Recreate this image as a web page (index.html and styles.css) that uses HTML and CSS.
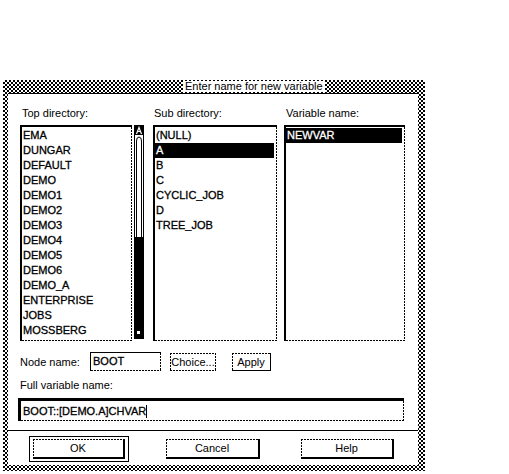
FILE: index.html
```html
<!DOCTYPE html>
<html>
<head>
<meta charset="utf-8">
<link rel="stylesheet" href="styles.css">
</head>
<body>
<div class="dialog">
  <div class="titlebar"><span class="title">Enter name for new variable</span></div>
  <div class="panel">
    <div class="cols">
      <div class="col col1">
        <div class="lbl">Top directory:</div>
        <div class="listrow">
          <div class="list list1 dash-rb">
            <div class="item">EMA</div>
            <div class="item">DUNGAR</div>
            <div class="item">DEFAULT</div>
            <div class="item">DEMO</div>
            <div class="item">DEMO1</div>
            <div class="item">DEMO2</div>
            <div class="item">DEMO3</div>
            <div class="item">DEMO4</div>
            <div class="item">DEMO5</div>
            <div class="item">DEMO6</div>
            <div class="item">DEMO_A</div>
            <div class="item">ENTERPRISE</div>
            <div class="item">JOBS</div>
            <div class="item">MOSSBERG</div>
          </div>
          <svg class="sb" width="10" height="214" viewBox="0 0 10 214">
            <rect x="0" y="0" width="10" height="214" fill="#fff"/>
            <rect x="0" y="0" width="10" height="10" fill="#000"/>
            <path d="M2.5 9 L5 2.5 L7.5 9 M3.5 6.5 H6.5" stroke="#fff" stroke-width="1.2" fill="none"/>
            <path d="M0.5 10 V112 M9.5 10 V112" stroke="#000" stroke-width="1"/>
            <path d="M2.5 112 V16 Q2.5 12 5 12 Q7.5 12 7.5 16 V112" stroke="#000" stroke-width="1" fill="none"/>
            <rect x="0" y="112" width="10" height="102" fill="#000"/>
            <rect x="3" y="206" width="3" height="3" fill="#fff"/>
          </svg>
        </div>
      </div>
      <div class="col col2">
        <div class="lbl">Sub directory:</div>
        <div class="list list2 dash-rb">
          <div class="item">(NULL)</div>
          <div class="item sel">A</div>
          <div class="item">B</div>
          <div class="item">C</div>
          <div class="item">CYCLIC_JOB</div>
          <div class="item">D</div>
          <div class="item">TREE_JOB</div>
        </div>
      </div>
      <div class="col col3">
        <div class="lbl">Variable name:</div>
        <div class="list list3 dash-rb">
          <div class="item sel">NEWVAR</div>
        </div>
      </div>
    </div>

    <div class="noderow">
      <span class="nodelbl">Node name:</span>
      <div class="field nodefield dash-rb">BOOT</div>
      <div class="smallbtn choice dash-all">Choice...</div>
      <div class="smallbtn apply dash-tl">Apply</div>
    </div>

    <div class="fulllbl">Full variable name:</div>
    <div class="field fullfield dash-rb">BOOT::[DEMO.A]CHVAR<span class="caret"></span></div>

    <div class="sep"></div>

    <div class="btnrow">
      <div class="defwrap"><div class="btn ok dash-tl">OK</div></div>
      <div class="btn cancel dash-tl">Cancel</div>
      <div class="btn help dash-tl">Help</div>
    </div>
  </div>
</div>
</body>
</html>
```

FILE: styles.css
```css
body {
  margin: 0;
  background: #fff;
  font-family: "Liberation Sans", Arial, sans-serif;
  font-size: 11px;
  color: #000;
}

.dialog {
  margin: 80px 0 0 3px;
  width: 422px;
  height: 391px;
  box-sizing: border-box;
  padding: 0 7px 6px 5px;
  background: repeating-conic-gradient(#000 0 25%, #fff 0 50%) 0 0 / 4px 4px;
  display: flex;
  flex-direction: column;
}

.titlebar {
  height: 13px;
  display: flex;
  justify-content: flex-start;
  align-items: center;
}

.title {
  background: #fff;
  margin-left: 175px;
  padding: 0 2px;
  line-height: 11px;
  height: 11px;
}

.panel {
  flex: 1;
  background: #fff;
  border-top: 1px solid #000;
  display: flex;
  flex-direction: column;
}

/* dashed edges */
.dash-rb {
  background-image:
    linear-gradient(180deg, #000 2px, transparent 2px),
    linear-gradient(90deg, #000 2px, transparent 2px);
  background-size: 1px 3px, 3px 1px;
  background-repeat: repeat-y, repeat-x;
  background-position: right top, left bottom;
}
.dash-tl {
  background-image:
    linear-gradient(180deg, #000 2px, transparent 2px),
    linear-gradient(90deg, #000 2px, transparent 2px);
  background-size: 1px 3px, 3px 1px;
  background-repeat: repeat-y, repeat-x;
  background-position: left top, left top;
}
.dash-all {
  background-image:
    linear-gradient(180deg, #000 2px, transparent 2px),
    linear-gradient(90deg, #000 2px, transparent 2px),
    linear-gradient(180deg, #000 2px, transparent 2px),
    linear-gradient(90deg, #000 2px, transparent 2px);
  background-size: 1px 3px, 3px 1px, 1px 3px, 3px 1px;
  background-repeat: repeat-y, repeat-x, repeat-y, repeat-x;
  background-position: left top, left top, right top, left bottom;
}

.cols {
  display: flex;
  padding: 13px 0 0 12px;
}
.col1 { margin-right: 9px; }
.col2 { margin-right: 7px; }

.lbl {
  height: 12px;
  line-height: 12px;
  margin: 0 0 6px 2px;
  white-space: nowrap;
}
.col2 .lbl { margin-left: 1px; }

.listrow {
  display: flex;
  gap: 2px;
  align-items: flex-start;
}

.list {
  height: 216px;
  box-sizing: border-box;
  border-top: 2px solid #000;
  border-left: 2px solid #000;
  padding-top: 1px;
  overflow: hidden;
}
.list1 { width: 112px; }
.list2 { width: 124px; }
.list3 { width: 121px; }

.item {
  height: 15px;
  line-height: 15px;
  padding-left: 1px;
  margin-right: 3px;
  white-space: nowrap;
  font-size: 11px;
  -webkit-text-stroke: 0.3px currentColor;
}
.sel {
  background: #000;
  color: #fff;
}

.sb {
  display: block;
}

.noderow {
  display: flex;
  align-items: center;
  margin-top: 11px;
  padding-left: 12px;
  height: 19px;
}
.nodelbl {
  width: 70px;
  white-space: nowrap;
}
.field {
  box-sizing: border-box;
  white-space: nowrap;
  -webkit-text-stroke: 0.3px currentColor;
}
.nodefield {
  width: 71px;
  height: 19px;
  line-height: 17px;
  border-top: 1px solid #000;
  border-left: 1px solid #000;
  padding-left: 2px;
}
.smallbtn {
  box-sizing: border-box;
  height: 18px;
  line-height: 18px;
  text-align: center;
}
.choice {
  width: 46px;
  margin-left: 9px;
}
.apply {
  width: 39px;
  margin-left: 16px;
  border-right: 1px solid #000;
  border-bottom: 1px solid #000;
}

.fulllbl {
  margin-top: 8px;
  padding-left: 12px;
  height: 12px;
  line-height: 12px;
}
.fullfield {
  margin: 7px 0 0 10px;
  width: 386px;
  height: 23px;
  line-height: 19px;
  border-top: 3px solid #000;
  border-left: 3px solid #000;
  padding-left: 2px;
  display: flex;
  align-items: center;
}
.caret {
  display: inline-block;
  width: 1px;
  height: 13px;
  background: #000;
}

.sep {
  margin-top: 9px;
  height: 1px;
  background: #000;
}

.btnrow {
  display: flex;
  align-items: center;
  margin-top: 5px;
  padding-left: 21px;
  height: 26px;
}
.defwrap {
  box-sizing: border-box;
  width: 100px;
  height: 26px;
  border: 1px solid #000;
  display: flex;
  align-items: center;
  justify-content: center;
}
.btn {
  box-sizing: border-box;
  height: 20px;
  line-height: 18px;
  text-align: center;
  border-right: 2px solid #000;
  border-bottom: 2px solid #000;
}
.ok { width: 92px; }
.cancel { width: 94px; margin-left: 37px; }
.help { width: 93px; margin-left: 41px; }
```
